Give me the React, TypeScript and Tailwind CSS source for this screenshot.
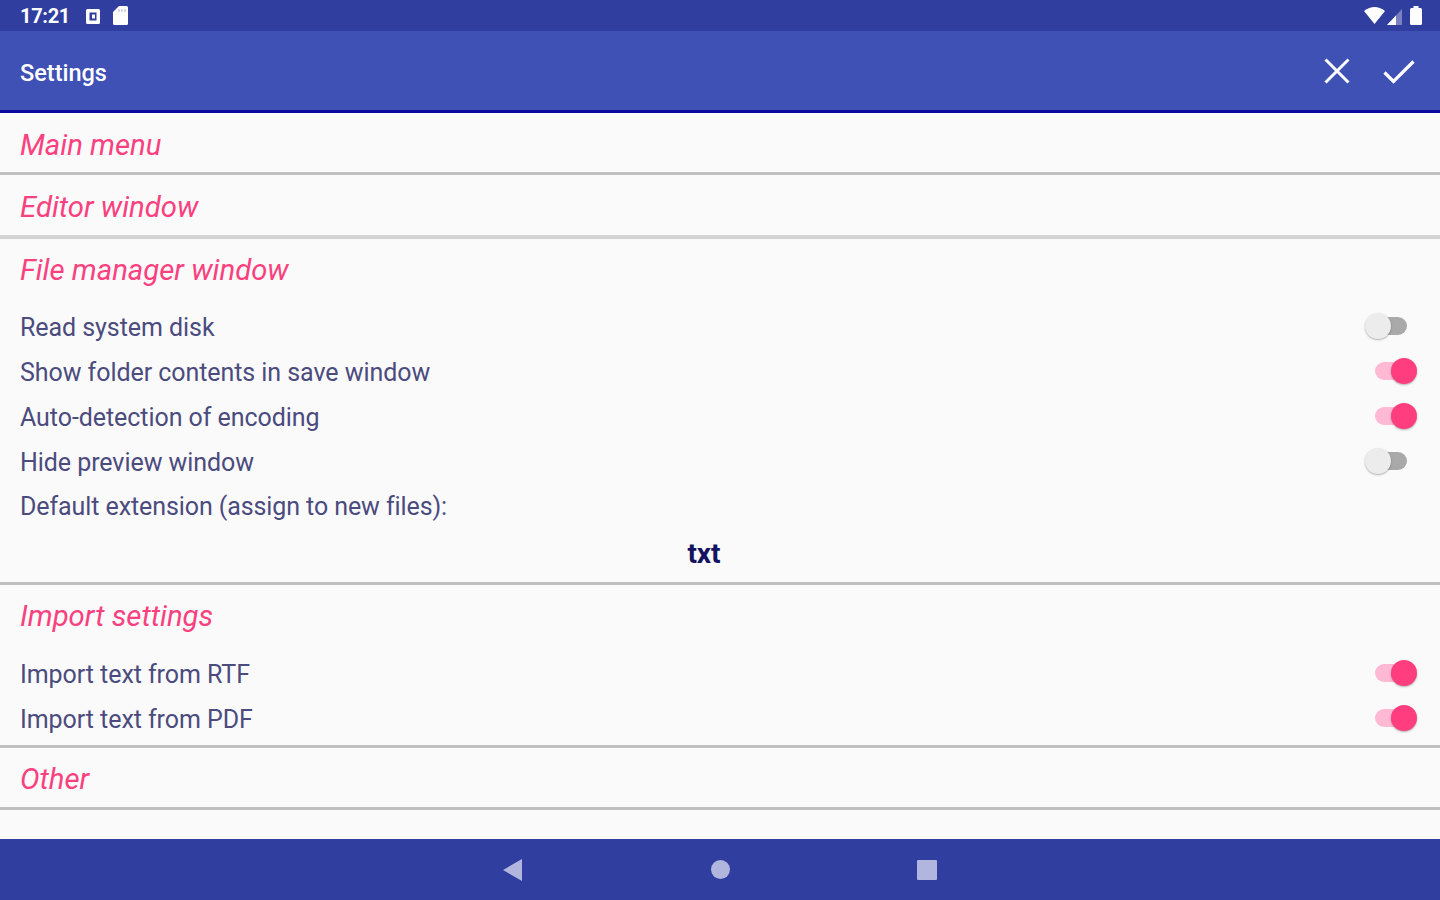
import React, { useState } from 'react';
import clsx from 'clsx';

interface SwitchRowProps {
  label: string;
  defaultOn?: boolean;
}

const SwitchRow: React.FC<SwitchRowProps> = ({ label, defaultOn = false }) => {
  const [on, setOn] = useState(defaultOn);

  return (
    <div className="flex h-[45px] items-center justify-between pl-5 pr-[33px]">
      <span className="mt-0.5 text-[25px] leading-[45px] tracking-[-0.06px] whitespace-nowrap text-[#4b4b7e]">{label}</span>
      <button
        role="switch"
        aria-checked={on}
        aria-label={label}
        onClick={() => setOn(!on)}
        className={clsx('relative mb-0.5 h-[18px] w-8 rounded-full', on ? 'bg-[#ffb9d2]' : 'bg-[#a9a9a9]')}
      >
        <span
          className={clsx(
            'absolute -top-1 size-[26px] rounded-full shadow-[0_1px_2px_rgba(0,0,0,0.3)]',
            on ? 'left-4 bg-[#ff3d7f]' : '-left-2.5 bg-[#ececec]'
          )}
        />
      </button>
    </div>
  );
};

interface SectionProps {
  title: string;
  className?: string;
  titleClassName?: string;
  children?: React.ReactNode;
}

const Section: React.FC<SectionProps> = ({
  title,
  className = 'border-b-[3px] border-[#c0c0c0]',
  titleClassName = 'leading-[62px]',
  children,
}) => (
  <section className={className}>
    <h2 className={clsx('h-[59px] pl-5 text-[29.3px] italic whitespace-nowrap text-[#f9417f]', titleClassName)}>
      {title}
    </h2>
    {children}
  </section>
);

const App: React.FC = () => {
  return (
    <div className="flex h-screen flex-col overflow-hidden bg-[#fafafa] font-['Roboto',sans-serif]">
      {/* Status bar */}
      <div className="flex h-[31px] items-center justify-between bg-[#303f9f] pr-[18px] pl-5 text-white">
        <div className="flex items-center">
          <span className="w-[66px] pt-0.5 text-[20px] leading-[31px] font-bold tracking-[-0.3px]">17:21</span>
          <svg className="mt-0.5 h-[15px] w-[14px]" viewBox="0 0 14 15" fill="currentColor">
            <path fillRule="evenodd" d="M1.5 0h11Q14 0 14 1.5v12q0 1.5-1.5 1.5h-11Q0 15 0 13.5v-12Q0 0 1.5 0ZM3.5 3.5v8h7v-8Z" />
            <rect x="6" y="5.5" width="3" height="4" />
          </svg>
          <svg className="ml-[13px] h-[19px] w-[15px]" viewBox="0 0 15 19" fill="currentColor">
            <path d="M6 0h7.5Q15 0 15 1.5v16q0 1.5-1.5 1.5h-12Q0 19 0 17.5V6Z" />
            <path d="M6 3v3M9 3v3M12 3v3" stroke="#b9bfe2" strokeWidth="1.2" />
          </svg>
        </div>
        <div className="flex items-center">
          <svg className="h-[17px] w-[21px]" viewBox="0 0 21 17" fill="currentColor">
            <path d="M0 4Q10.5-4 21 4L10.5 17Z" />
          </svg>
          <svg className="mt-0.5 ml-[2px] h-4 w-[15px]" viewBox="0 0 15 16" fill="currentColor">
            <path d="M15 0v16H0Z" opacity="0.35" />
            <path d="M9 6.4V16H0Z" />
          </svg>
          <svg className="ml-[8px] h-[19px] w-[12px]" viewBox="0 0 12 19" fill="currentColor">
            <path d="M3.5 0h5v2h2Q12 2 12 3.5v14q0 1.5-1.5 1.5h-9Q0 19 0 17.5v-14Q0 2 1.5 2h2Z" />
          </svg>
        </div>
      </div>

      {/* Toolbar */}
      <header className="flex h-[82px] items-center justify-between border-b-[3px] border-[#0a0aa0] bg-[#3f51b5] pr-[25px] pl-5 text-white">
        <h1 className="pt-1.5 text-[23.5px] font-medium">Settings</h1>
        <div className="flex items-center gap-[33px]">
          <button aria-label="Cancel">
            <svg className="mt-px h-[26px] w-[26px]" viewBox="0 0 26 26" fill="none" stroke="currentColor" strokeWidth="3">
              <path d="M1.5 1.5l23 23M24.5 1.5l-23 23" />
            </svg>
          </button>
          <button aria-label="Apply">
            <svg className="mt-0.5 h-[24px] w-[32px]" viewBox="0 0 32 24" fill="none" stroke="currentColor" strokeWidth="3.2">
              <path d="M1.5 12.5l9 9L30.5 1.5" />
            </svg>
          </button>
        </div>
      </header>

      <main className="flex-1 overflow-hidden">
        <Section title="Main menu" titleClassName="leading-[64px]" />
        <Section title="Editor window" className="border-b-4 border-[#d3d3d3] pb-px" titleClassName="leading-[64px]" />
        <Section title="File manager window">
          <div className="pt-1.5 pb-1">
            <SwitchRow label="Read system disk" />
            <SwitchRow label="Show folder contents in save window" defaultOn />
            <SwitchRow label="Auto-detection of encoding" defaultOn />
            <SwitchRow label="Hide preview window" />
            <p className="h-[46px] pl-5 text-[25px] leading-[45px] tracking-[-0.09px] text-[#4b4b7e]">
              Default extension (assign to new files):
            </p>
            <p className="h-[48px] pr-8 text-center text-[28px] leading-[48px] font-bold text-[#13135f]">txt</p>
          </div>
        </Section>
        <Section title="Import settings">
          <div className="pt-[7px] pb-1">
            <SwitchRow label="Import text from RTF" defaultOn />
            <SwitchRow label="Import text from PDF" defaultOn />
          </div>
        </Section>
        <Section title="Other" />
      </main>

      {/* Navigation bar */}
      <nav className="flex h-[61px] items-center justify-center gap-[188px] bg-[#303f9f] text-[#b1b6df]">
        <svg className="h-[22px] w-[19px]" viewBox="0 0 19 22" fill="currentColor">
          <path d="M19 0v22L0 11Z" />
        </svg>
        <svg className="ml-px h-[19px] w-[19px]" viewBox="0 0 19 19" fill="currentColor">
          <circle cx="9.5" cy="9.5" r="9.5" />
        </svg>
        <svg className="-ml-px h-[20px] w-[20px]" viewBox="0 0 20 20" fill="currentColor">
          <rect width="20" height="20" rx="1" />
        </svg>
      </nav>
    </div>
  );
};

export default App;
